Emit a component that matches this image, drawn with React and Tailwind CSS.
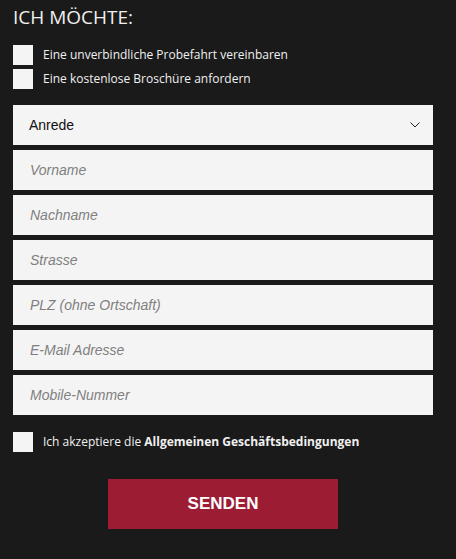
const fields = ["Vorname", "Nachname", "Strasse", "PLZ (ohne Ortschaft)", "E-Mail Adresse", "Mobile-Nummer"];

const Box = () => <span className="w-5 h-5 bg-[#f4f4f4] shrink-0" />;

export default function App() {
  return (
    <div className="w-[456px] h-[559px] bg-[#1a1a1a] pl-[13px] pt-[5px] font-['Open_Sans',sans-serif]">
      <h2 className="text-[19px] leading-[24px] text-[#f0f0f0] uppercase">Ich möchte:</h2>

      <div className="mt-4 flex flex-col gap-1">
        <label className="flex items-center gap-[10px] text-[12px] text-[#f0f0f0]">
          <Box />
          Eine unverbindliche Probefahrt vereinbaren
        </label>
        <label className="flex items-center gap-[10px] text-[12px] text-[#f0f0f0]">
          <Box />
          Eine kostenlose Broschüre anfordern
        </label>
      </div>

      <div className="mt-4 w-[420px] flex flex-col gap-[5px] font-['Liberation_Sans',Arial,sans-serif] text-[14px]">
        <div className="h-10 bg-[#f4f4f4] flex items-center justify-between pl-4 pr-3 text-[#111]">
          <span>Anrede</span>
          <svg width="10" height="6" viewBox="0 0 10 6" className="mr-[1px]">
            <path d="M0.5 0.5 L5 5 L9.5 0.5" fill="none" stroke="#222" strokeWidth="1" />
          </svg>
        </div>
        {fields.map((f) => (
          <div key={f} className="h-10 bg-[#f4f4f4] flex items-center pl-[17px] italic text-[#808080]">
            {f}
          </div>
        ))}
      </div>

      <label className="mt-[17px] flex items-center gap-[10px] text-[12px] text-[#f0f0f0]">
        <Box />
        <span>
          Ich akzeptiere die <b className="font-bold">Allgemeinen Geschäftsbedingungen</b>
        </span>
      </label>

      <div className="w-[420px] flex justify-center mt-[27px]">
        <button className="w-[230px] h-[50px] bg-[#9c1c33] text-white font-bold text-[17px] font-['Liberation_Sans',Arial,sans-serif]">
          SENDEN
        </button>
      </div>
    </div>
  );
}
